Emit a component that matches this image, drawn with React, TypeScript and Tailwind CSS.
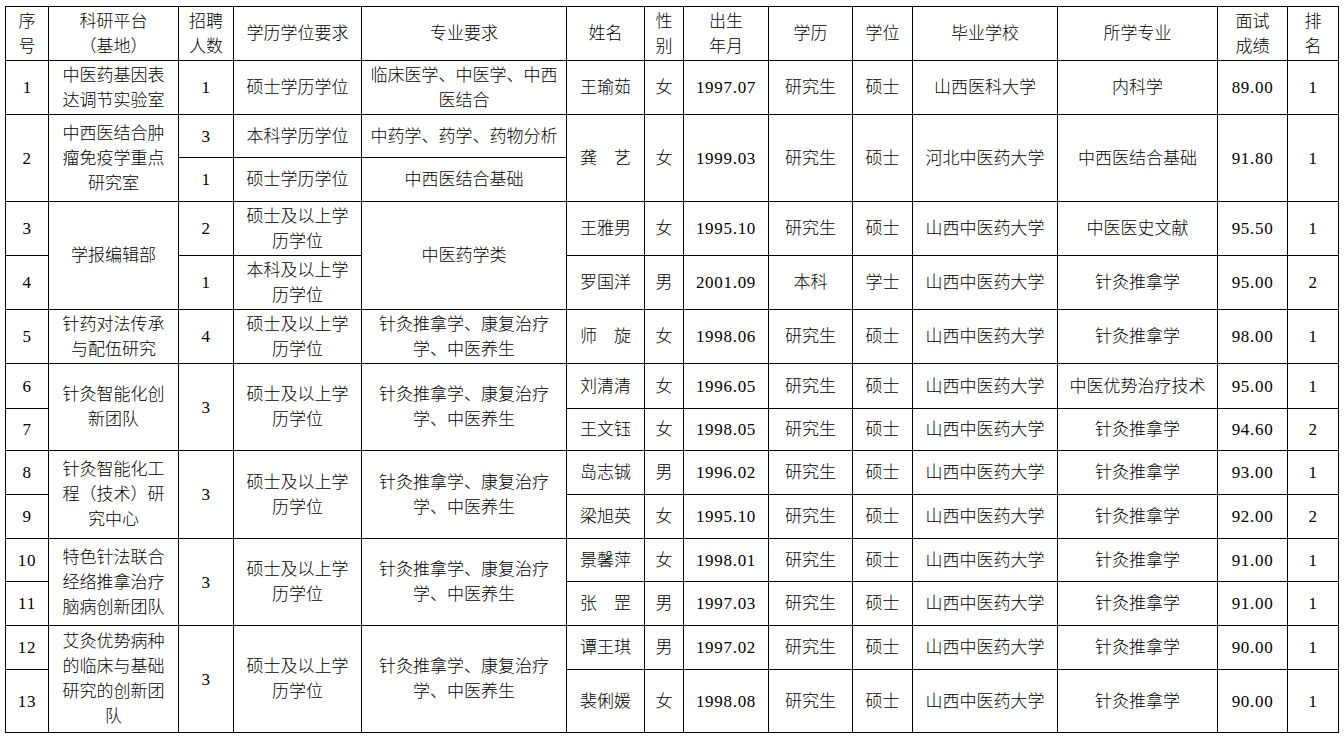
import React from "react";

type C = { t: string; rs?: number; num?: boolean };

const widths = [43, 130, 55, 128, 205, 78, 39, 85, 84, 60, 145, 160, 70, 51];

function Cell({ c }: { c: C }) {
  const lines = c.t.split("|");
  return (
    <td
      rowSpan={c.rs}
      className={
        "border border-black p-0 text-center align-middle whitespace-nowrap leading-[25px] text-black " +
        (c.num ? "tracking-[0.7px]" : "")
      }
    >
      {lines.map((l, i) => (
        <React.Fragment key={i}>
          {i > 0 && <br />}
          {l}
        </React.Fragment>
      ))}
    </td>
  );
}

const n = (t: string, rs?: number): C => ({ t, rs, num: true });
const s = (t: string, rs?: number): C => ({ t, rs });

const A = "硕士及以上学|历学位";
const Z = "针灸推拿学、康复治疗|学、中医养生";
const SX = "山西中医药大学";
const ZJ = "针灸推拿学";

const rows: { h: string; cells: C[] }[] = [
  {
    h: "h-[54px]",
    cells: [
      s("1"), s("中医药基因表|达调节实验室"), n("1"), s("硕士学历学位"), s("临床医学、中医学、中西|医结合"),
      s("王瑜茹"), s("女"), n("1997.07"), s("研究生"), s("硕士"), s("山西医科大学"), s("内科学"), n("89.00"), n("1"),
    ],
  },
  {
    h: "h-[43px]",
    cells: [
      n("2", 2), s("中西医结合肿|瘤免疫学重点|研究室", 2), n("3"), s("本科学历学位"), s("中药学、药学、药物分析"),
      s("龚　艺", 2), s("女", 2), n("1999.03", 2), s("研究生", 2), s("硕士", 2), s("河北中医药大学", 2), s("中西医结合基础", 2), n("91.80", 2), n("1", 2),
    ],
  },
  { h: "h-[44px]", cells: [n("1"), s("硕士学历学位"), s("中西医结合基础")] },
  {
    h: "h-[54px]",
    cells: [
      n("3"), s("学报编辑部", 2), n("2"), s(A), s("中医药学类", 2),
      s("王雅男"), s("女"), n("1995.10"), s("研究生"), s("硕士"), s(SX), s("中医医史文献"), n("95.50"), n("1"),
    ],
  },
  {
    h: "h-[54px]",
    cells: [
      n("4"), n("1"), s("本科及以上学|历学位"),
      s("罗国洋"), s("男"), n("2001.09"), s("本科"), s("学士"), s(SX), s(ZJ), n("95.00"), n("2"),
    ],
  },
  {
    h: "h-[54px]",
    cells: [
      n("5"), s("针药对法传承|与配伍研究"), n("4"), s(A), s(Z),
      s("师　旋"), s("女"), n("1998.06"), s("研究生"), s("硕士"), s(SX), s(ZJ), n("98.00"), n("1"),
    ],
  },
  {
    h: "h-[45px]",
    cells: [
      n("6"), s("针灸智能化创|新团队", 2), n("3", 2), s(A, 2), s(Z, 2),
      s("刘清清"), s("女"), n("1996.05"), s("研究生"), s("硕士"), s(SX), s("中医优势治疗技术"), n("95.00"), n("1"),
    ],
  },
  {
    h: "h-[42px]",
    cells: [
      n("7"), s("王文钰"), s("女"), n("1998.05"), s("研究生"), s("硕士"), s(SX), s(ZJ), n("94.60"), n("2"),
    ],
  },
  {
    h: "h-[44px]",
    cells: [
      n("8"), s("针灸智能化工|程（技术）研|究中心", 2), n("3", 2), s(A, 2), s(Z, 2),
      s("岛志铖"), s("男"), n("1996.02"), s("研究生"), s("硕士"), s(SX), s(ZJ), n("93.00"), n("1"),
    ],
  },
  {
    h: "h-[44px]",
    cells: [
      n("9"), s("梁旭英"), s("女"), n("1995.10"), s("研究生"), s("硕士"), s(SX), s(ZJ), n("92.00"), n("2"),
    ],
  },
  {
    h: "h-[43px]",
    cells: [
      n("10"), s("特色针法联合|经络推拿治疗|脑病创新团队", 2), n("3", 2), s(A, 2), s(Z, 2),
      s("景馨萍"), s("女"), n("1998.01"), s("研究生"), s("硕士"), s(SX), s(ZJ), n("91.00"), n("1"),
    ],
  },
  {
    h: "h-[44px]",
    cells: [
      n("11"), s("张　罡"), s("男"), n("1997.03"), s("研究生"), s("硕士"), s(SX), s(ZJ), n("91.00"), n("1"),
    ],
  },
  {
    h: "h-[44px]",
    cells: [
      n("12"), s("艾灸优势病种|的临床与基础|研究的创新团|队", 2), n("3", 2), s(A, 2), s(Z, 2),
      s("谭王琪"), s("男"), n("1997.02"), s("研究生"), s("硕士"), s(SX), s(ZJ), n("90.00"), n("1"),
    ],
  },
  {
    h: "h-[63px]",
    cells: [
      n("13"), s("裴俐媛"), s("女"), n("1998.08"), s("研究生"), s("硕士"), s(SX), s(ZJ), n("90.00"), n("1"),
    ],
  },
];

const header = [
  "序|号", "科研平台|（基地）", "招聘|人数", "学历学位要求", "专业要求", "姓名", "性|别", "出生|年月",
  "学历", "学位", "毕业学校", "所学专业", "面试|成绩", "排|名",
];

export default function App() {
  return (
    <div
      className="w-[1344px] h-[739px] bg-white pl-[5px] pt-[6px] overflow-hidden text-[17px] font-light"
      style={{ fontFamily: '"Liberation Serif", "Noto Sans CJK SC", serif' }}
    >
      <table className="border-collapse table-fixed w-[1334px]">
        <colgroup>
          {widths.map((w, i) => (
            <col key={i} style={{ width: w }} />
          ))}
        </colgroup>
        <tbody>
          <tr className="h-[54px]">
            {header.map((h, i) => (
              <Cell key={i} c={{ t: h }} />
            ))}
          </tr>
          {rows.map((r, i) => (
            <tr key={i} className={r.h}>
              {r.cells.map((c, j) => (
                <Cell key={j} c={c} />
              ))}
            </tr>
          ))}
        </tbody>
      </table>
    </div>
  );
}
